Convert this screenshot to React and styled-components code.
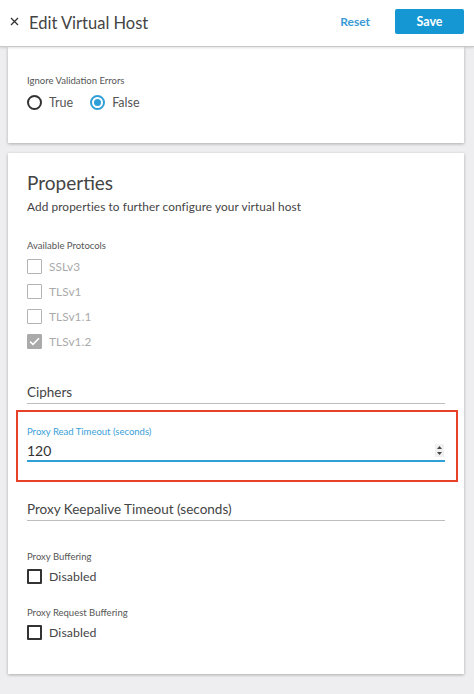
import styled, { createGlobalStyle } from 'styled-components';

// ── Global ─────────────────────────────────────────────────
const GlobalStyle = createGlobalStyle`
  html, body {
    margin: 0;
    padding: 0;
    background: #eeeef0;
    font-family: Lato, "Open Sans", "Liberation Sans", sans-serif;
    color: #444;
  }
  * { box-sizing: border-box; }
`;

// ── Header ─────────────────────────────────────────────────
const Header = styled.header`
  height: 47px;
  background: #fff;
  border-bottom: 1px solid #c8c8c8;
  box-shadow: 0 1px 2px rgba(0, 0, 0, 0.12);
  display: flex;
  align-items: center;
  padding: 0 10px 0 9px;
  position: relative;
  z-index: 2;
`;

const Close = styled.button`
  border: 0;
  background: none;
  padding: 0;
  width: 11px;
  height: 11px;
  margin-right: 8px;
  margin-top: -3px;
  display: flex;
  color: #333;
`;

const Title = styled.h1`
  font-size: 16.5px;
  font-weight: 400;
  color: #444;
  margin: 0 0 0 1px;
  flex: 1;
`;

const ResetLink = styled.button`
  border: 0;
  background: none;
  color: #3a9ad6;
  font: 700 12px Lato, sans-serif;
  padding: 0;
  margin-right: 25px;
  margin-top: -4px;
`;

const SaveButton = styled.button`
  border: 0;
  background: #1497d3;
  color: #fff;
  font: 700 12.5px Lato, sans-serif;
  width: 69px;
  height: 25px;
  border-radius: 2px;
  margin-top: -4px;
`;

// ── Body / cards ───────────────────────────────────────────
const Body = styled.main`
  padding: 0 10px 19px 8px;
  display: flex;
  flex-direction: column;
  gap: 10px;
`;

const Card = styled.section`
  background: #fff;
  box-shadow: 0 1px 3px rgba(0, 0, 0, 0.28);
  padding: ${(p) => p.$pad};
`;

const SectionTitle = styled.h2`
  font-size: 19px;
  font-weight: 400;
  line-height: 24px;
  margin: 0;
  color: #444;
`;

const SectionDesc = styled.p`
  font-size: 11.8px;
  line-height: 18px;
  margin: 3px 0 0;
  color: #444;
  letter-spacing: 0.1px;
`;

const FieldLabel = styled.div`
  font-size: 9.5px;
  line-height: 14px;
  color: ${(p) => (p.$active ? '#3aa0d8' : '#555')};
  margin-top: ${(p) => p.$mt || 0}px;
`;

// ── Radios ─────────────────────────────────────────────────
const RadioRow = styled.div`
  display: flex;
  align-items: center;
  height: 20px;
  margin-top: 4px;
  gap: 17px;
`;

const RadioItem = styled.label`
  display: flex;
  align-items: center;
  gap: 7px;
  font-size: 12.5px;
  color: #555;
`;

const RadioCircle = styled.span`
  width: 15px;
  height: 15px;
  border-radius: 50%;
  border: 2px solid ${(p) => (p.$on ? '#2f9fd8' : '#333')};
  display: flex;
  align-items: center;
  justify-content: center;

  &::after {
    content: '';
    width: 7px;
    height: 7px;
    border-radius: 50%;
    background: ${(p) => (p.$on ? '#2f9fd8' : 'transparent')};
  }
`;

// ── Checkboxes ─────────────────────────────────────────────
const CheckList = styled.div`
  margin-top: ${(p) => p.$mt || 0}px;
`;

const CheckRow = styled.label`
  display: flex;
  align-items: center;
  gap: 7px;
  height: 25px;
  font-size: ${(p) => (p.$disabled ? '11.8px' : '12.3px')};
  color: ${(p) => (p.$disabled ? '#aaa' : '#444')};
  letter-spacing: 0.1px;
`;

const Box = styled.span`
  width: 15px;
  height: 15px;
  border-radius: 1px;
  border: ${(p) => (p.$disabled ? '1.5px solid #b4b4b4' : '2px solid #333')};
  background: ${(p) => (p.$checked ? '#aaa' : '#fff')};
  display: flex;
  align-items: center;
  justify-content: center;
  ${(p) => p.$checked && 'border-color: #aaa;'}
`;

// ── Text fields ────────────────────────────────────────────
const LineField = styled.div`
  margin-top: ${(p) => p.$mt}px;
  border-bottom: 1px solid #bdbdbd;
  font-size: 13.5px;
  line-height: 20px;
  padding-bottom: 1px;
  color: #444;
`;

const Highlight = styled.div`
  margin: 6px -13px 0 -11px;
  border: 2px solid #e8412a;
  padding: 13px 11px 18px 9px;
`;

const ValueRow = styled.div`
  display: flex;
  align-items: center;
  justify-content: space-between;
  height: 20px;
  margin-top: 1px;
  font-size: 14px;
  color: #333;
  border-bottom: 2px solid #2f9fd8;
  box-sizing: content-box;
`;

const Spinner = styled.span`
  width: 9px;
  height: 13px;
  background: #f0f0f0;
  display: flex;
  align-items: center;
  justify-content: center;
  margin-right: 1px;
`;

// ── Data ───────────────────────────────────────────────────
const protocols = [
  { name: 'SSLv3', checked: false },
  { name: 'TLSv1', checked: false },
  { name: 'TLSv1.1', checked: false },
  { name: 'TLSv1.2', checked: true },
];

const Check = () => (
  <svg width="11" height="9" viewBox="0 0 11 9">
    <path d="M1 4.6 L4 7.4 L10 1.2" fill="none" stroke="#fff" strokeWidth="1.6" />
  </svg>
);

// ── Component ──────────────────────────────────────────────
export default function App() {
  return (
    <>
      <GlobalStyle />
      <Header>
        <Close aria-label="close">
          <svg width="11" height="11" viewBox="0 0 11 11">
            <path d="M2 2 L9 9 M9 2 L2 9" stroke="#333" strokeWidth="1.3" />
          </svg>
        </Close>
        <Title>Edit Virtual Host</Title>
        <ResetLink>Reset</ResetLink>
        <SaveButton>Save</SaveButton>
      </Header>

      <Body>
        <Card $pad="27px 19px 31px">
          <FieldLabel>Ignore Validation Errors</FieldLabel>
          <RadioRow>
            <RadioItem>
              <RadioCircle />
              True
            </RadioItem>
            <RadioItem>
              <RadioCircle $on />
              False
            </RadioItem>
          </RadioRow>
        </Card>

        <Card $pad="18px 19px 29px">
          <SectionTitle>Properties</SectionTitle>
          <SectionDesc>Add properties to further configure your virtual host</SectionDesc>

          <FieldLabel $mt={23}>Available Protocols</FieldLabel>
          <CheckList $mt={1}>
            {protocols.map((p) => (
              <CheckRow key={p.name} $disabled>
                <Box $disabled $checked={p.checked}>
                  {p.checked && <Check />}
                </Box>
                {p.name}
              </CheckRow>
            ))}
          </CheckList>

          <LineField $mt={28}>Ciphers</LineField>

          <Highlight>
            <FieldLabel $active>Proxy Read Timeout (seconds)</FieldLabel>
            <ValueRow>
              120
              <Spinner>
                <svg width="7" height="11" viewBox="0 0 7 11">
                  <path d="M3.5 1 L6 4 L1 4 Z M3.5 10 L6 7 L1 7 Z" fill="#444" />
                </svg>
              </Spinner>
            </ValueRow>
          </Highlight>

          <LineField $mt={17}>Proxy Keepalive Timeout (seconds)</LineField>

          <FieldLabel $mt={29}>Proxy Buffering</FieldLabel>
          <CheckRow>
            <Box />
            Disabled
          </CheckRow>

          <FieldLabel $mt={17}>Proxy Request Buffering</FieldLabel>
          <CheckRow>
            <Box />
            Disabled
          </CheckRow>
        </Card>
      </Body>
    </>
  );
}
